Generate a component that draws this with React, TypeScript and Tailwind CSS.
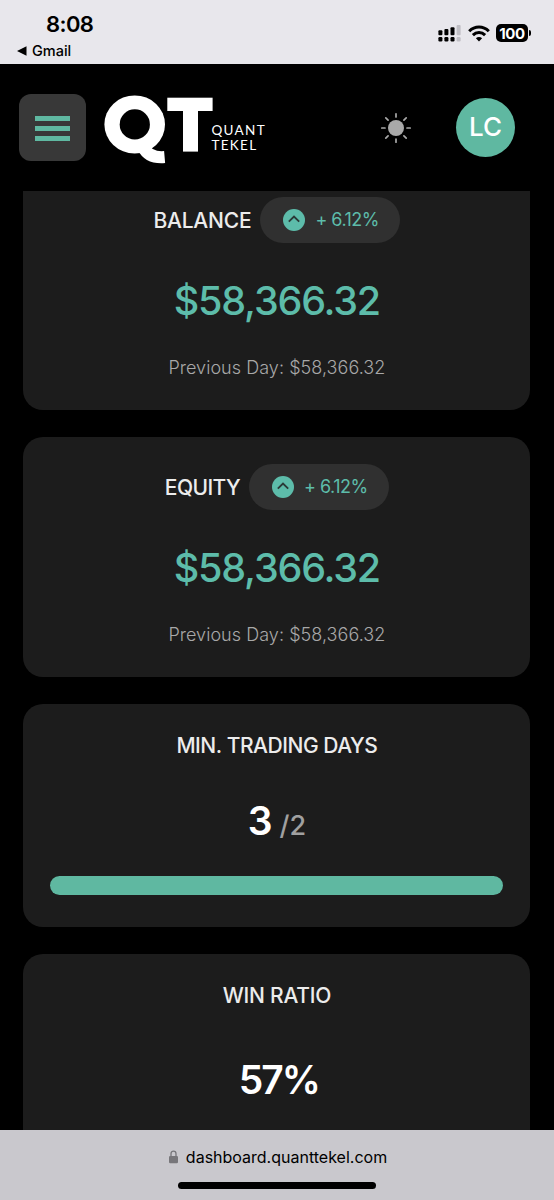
import type { ReactNode } from 'react';

const SignalIcon = () => (
  <svg width="24" height="18" viewBox="0 0 24 18" fill="#000">
    <rect x="0.4" y="6.2" width="4" height="5" rx="1" />
    <rect x="6.4" y="5" width="4" height="6.2" rx="1" />
    <rect x="12.5" y="3.2" width="4" height="8" rx="1" />
    <rect x="18.6" y="1" width="4" height="10.2" rx="1" fill="#bfbec4" />
    <rect x="0.4" y="13" width="4" height="4.4" rx="1.2" />
    <rect x="6.4" y="13" width="4" height="4.4" rx="1.2" />
    <rect x="12.5" y="13" width="4" height="4.4" rx="1.2" />
    <rect x="18.6" y="13" width="4" height="4.4" rx="1.2" fill="#bfbec4" />
  </svg>
);

const WifiIcon = () => (
  <svg width="22" height="17" viewBox="0 0 22 17" fill="none" stroke="#000" strokeWidth="3">
    <path d="M1.2 6.2 C6.8 0.6 15.2 0.6 20.8 6.2" />
    <path d="M4.9 10.1 C8.4 6.6 13.6 6.6 17.1 10.1" />
    <path d="M11 16.4 L7.9 13.3 C9.6 11.6 12.4 11.6 14.1 13.3 Z" fill="#000" stroke="none" />
  </svg>
);

const SunIcon = () => (
  <svg width="32" height="32" viewBox="-16 -16 32 32" stroke="#a9a9a9" strokeWidth="1.7" strokeLinecap="round">
    <circle r="8" fill="#a9a9a9" stroke="none" />
    <path d="M0 -14.2V-11M0 14.2V11M-14.2 0H-11M14.2 0H11M-10.2 -10.2L-7.9 -7.9M10.2 10.2L7.9 7.9M-10.2 10.2L-7.9 7.9M10.2 -10.2L7.9 -7.9" />
  </svg>
);

const Logo = () => (
  <div className="flex">
    <svg width="109" height="70" viewBox="0 0 109 70" fill="none" className="shrink-0">
      <ellipse cx="30.7" cy="29.4" rx="30.3" ry="29" fill="#fff" />
      <circle cx="30.8" cy="29.4" r="15.1" fill="#000" />
      <path d="M39 52 C43 60 50 63 60.6 62.1" stroke="#fff" strokeWidth="12" />
      <rect x="63.3" y="2.7" width="45.3" height="13.3" fill="#fff" />
      <rect x="79" y="3" width="15" height="53.6" fill="#fff" />
    </svg>
    <div className="-ml-[1.5px] mt-[27.5px] font-[Lato] text-[13.5px] leading-[15.3px] tracking-[1.3px] text-white">
      <div>QUANT</div>
      <div>TEKEL</div>
    </div>
  </div>
);

const UpIcon = () => (
  <svg width="22" height="22" viewBox="0 0 22 22" fill="none" className="shrink-0">
    <circle cx="11" cy="11" r="11" fill="#5dbcaa" />
    <path d="M5.8 12.6L11 7.6L16.2 12.6" stroke="#2b3a38" strokeWidth="1.9" />
  </svg>
);

const Card = ({ className, children }: { className: string; children: ReactNode }) => (
  <section className={`flex shrink-0 flex-col items-center rounded-[20px] bg-[#1c1c1c] ${className}`}>{children}</section>
);

const Title = ({ tracking, children }: { tracking: string; children: ReactNode }) => (
  <h2 className={`whitespace-nowrap pt-px text-[21px] font-medium leading-[26px] text-[#ececec] ${tracking}`}>{children}</h2>
);

const MoneyCard = ({ title, tracking }: { title: string; tracking: string }) => (
  <Card className="h-[240px] pt-[27px]">
    <div className="flex h-[46px] items-center gap-[9px]">
      <Title tracking={tracking}>{title}</Title>
      <div className="flex h-[46px] w-[140px] items-center gap-[10px] rounded-full bg-[#303030] pl-[23px]">
        <UpIcon />
        <span className="-mt-px whitespace-nowrap text-[18px] leading-6 tracking-[-0.5px] text-[#5dbcaa]">+ 6.12%</span>
      </div>
    </div>
    <div className="mt-[34px] text-[39.5px] font-medium leading-[48px] tracking-[-1.2px] text-[#5dbcaa]">$58,366.32</div>
    <div className="mt-[31px] text-[18px] font-light leading-6 tracking-[0.05px] text-[#a8a8a8]">Previous Day: $58,366.32</div>
  </Card>
);

export default function App() {
  return (
    <div className="flex h-[1200px] w-[554px] flex-col overflow-hidden bg-black font-[Inter,sans-serif]">
      <div className="flex h-16 shrink-0 justify-between bg-[#e8e7ec] pl-[17px] pr-[23px]">
        <div className="flex flex-col">
          <div className="ml-[29px] mt-[10px] text-[22px] font-semibold leading-[28px] tracking-[-0.6px] text-black">8:08</div>
          <div className="flex items-center gap-[5px] text-[14.5px] font-medium leading-[26px] text-black">
            <svg width="10" height="10" viewBox="0 0 10 10">
              <path d="M0 5L9.5 0.3V9.7Z" />
            </svg>
            Gmail
          </div>
        </div>
        <div className="mt-[24px] flex h-[18px] items-center">
          <SignalIcon />
          <div className="ml-[6px]"><WifiIcon /></div>
          <div className="ml-[6px] flex h-[18px] w-[32px] items-center justify-center rounded-[5px] bg-black text-[15px] font-bold leading-none tracking-[-0.4px] text-white">100</div>
          <div className="ml-[1px] h-[6px] w-[2px] rounded-r-full bg-black" />
        </div>
      </div>
      <header className="flex h-[127px] shrink-0 items-center pl-[19px]">
        <div className="flex h-[67px] w-[67px] flex-col items-center justify-center gap-[5px] rounded-[12px] bg-[#383838] pt-[2px]">
          <div className="h-[5px] w-[35px] bg-[#5fb8a1]" />
          <div className="h-[5px] w-[35px] bg-[#5fb8a1]" />
          <div className="h-[5px] w-[35px] bg-[#5fb8a1]" />
        </div>
        <div className="ml-[18px] mt-[5px] w-[276px]"><Logo /></div>
        <div className="mt-px"><SunIcon /></div>
        <div className="ml-[44px] flex h-[59px] w-[59px] items-center justify-center rounded-full bg-[#5fb8a1] pb-[2px] text-[26px] font-medium text-white">LC</div>
      </header>
      <main className="flex h-[939px] shrink-0 flex-col overflow-hidden pl-[23.4px] pr-[23.6px]">
        <div className="-mt-[21px] flex flex-col gap-[27px]">
          <MoneyCard title="BALANCE" tracking="tracking-[-0.2px]" />
          <MoneyCard title="EQUITY" tracking="tracking-[-0.6px]" />
          <Card className="h-[223px] px-[27px] pt-[28px]">
            <Title tracking="tracking-[-0.45px]">MIN. TRADING DAYS</Title>
            <div className="mt-[38px] flex h-[48px] items-baseline gap-[8px] leading-[48px]">
              <span className="text-[39px] font-semibold tracking-[-1px] text-white">3</span>
              <span className="text-[27px] font-medium text-[#a0a0a0]">/2</span>
            </div>
            <div className="mt-[31px] h-[19px] w-full rounded-full bg-[#5fb8a1]" />
          </Card>
          <Card className="h-[240px] pt-[28px]">
            <Title tracking="tracking-[-0.25px]">WIN RATIO</Title>
            <div className="mt-[47px] pl-[4px] text-[39px] font-semibold leading-[48px] tracking-[-2px] text-white">57%</div>
          </Card>
        </div>
      </main>
      <footer className="flex h-[70px] shrink-0 flex-col items-center bg-[#c9c8cd] pt-[15px]">
        <div className="flex items-center gap-[8px] pl-[2px] text-[16px] leading-6 text-black">
          <svg width="9" height="14" viewBox="0 0 9 14" fill="none">
            <path d="M2 7V3.8C2 0.3 7 0.3 7 3.8V7" stroke="#77767a" strokeWidth="1.3" />
            <rect y="6" width="9" height="7.2" rx="1.2" fill="#77767a" />
          </svg>
          dashboard.quanttekel.com
        </div>
        <div className="mt-[13px] h-[7px] w-[198px] rounded-full bg-black" />
      </footer>
    </div>
  );
}
